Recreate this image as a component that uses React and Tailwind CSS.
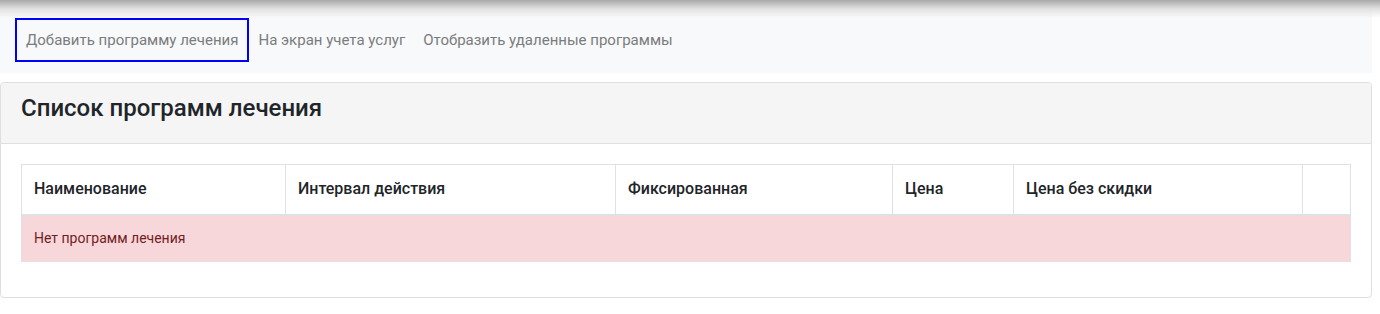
import React from 'react';

const cols = [
  { label: 'Наименование', w: 'w-[264px]' },
  { label: 'Интервал действия', w: 'w-[330px]' },
  { label: 'Фиксированная', w: 'w-[277px]' },
  { label: 'Цена', w: 'w-[121px]' },
  { label: 'Цена без скидки', w: 'w-[289px]' },
  { label: '', w: '' },
];

const App = () => {
  return (
    <div className="relative min-h-screen bg-white font-['Roboto',sans-serif] text-[#212529]">
      {/* shadow from the header above */}
      <div className="absolute left-0 right-0 top-0 h-[18px] bg-gradient-to-b from-[#a9a9a9] via-[#e2e2e2] to-transparent pointer-events-none" />

      <nav className="w-[1372px] h-[73px] bg-[#f8f9fa] flex items-center pl-[15px] pt-[7px]">
        <a className="px-[9px] h-[44px] flex items-center border-2 border-[#0000ff] text-[15px] text-[#7b7c7d]">
          Добавить программу лечения
        </a>
        <a className="px-[9px] h-[44px] flex items-center text-[15px] text-[#7b7c7d]">На экран учета услуг</a>
        <a className="px-[9px] h-[44px] flex items-center text-[15px] text-[#7b7c7d]">Отобразить удаленные программы</a>
      </nav>

      <div className="mt-[9px] w-[1372px] border border-[#dfdfdf] rounded-[4px] overflow-hidden">
        <div className="h-[61px] bg-[#f5f5f5] border-b border-[#dfdfdf] px-[20px] pt-[11px]">
          <h2 className="text-[24px] leading-[29px] font-medium text-[#212529]">Список программ лечения</h2>
        </div>
        <div className="px-[20px] pt-[20px] pb-[35px]">
          <table className="w-[1330px] border-collapse">
            <thead>
              <tr>
                {cols.map((c, i) => (
                  <th
                    key={i}
                    className={`${c.w} h-[50px] border border-[#dee2e6] border-b-2 px-[12px] text-left text-[16px] font-medium text-[#212529]`}
                  >
                    {c.label}
                  </th>
                ))}
              </tr>
            </thead>
            <tbody>
              <tr>
                <td colSpan={6} className="h-[47px] bg-[#f8d7da] border border-[#dee2e6] px-[12px] text-[14px] text-[#721c24]">
                  Нет программ лечения
                </td>
              </tr>
            </tbody>
          </table>
        </div>
      </div>
    </div>
  );
};

export default App;
